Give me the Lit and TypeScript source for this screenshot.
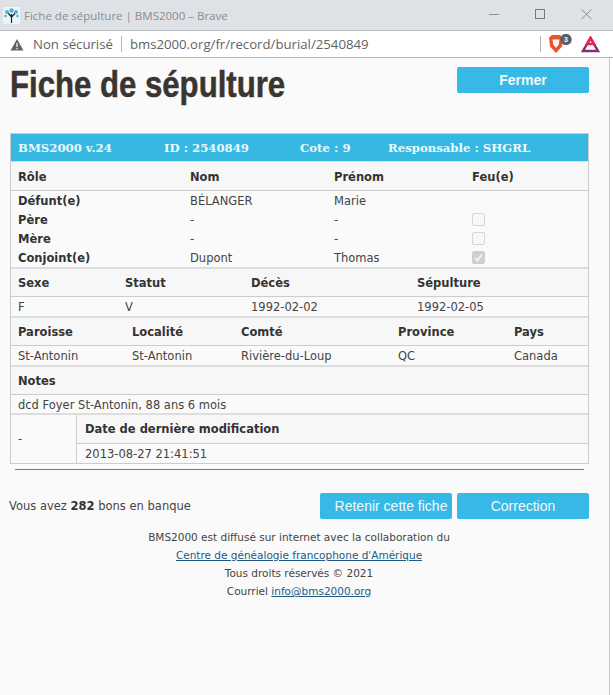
import { LitElement, html, css } from "lit";
import { customElement } from "lit/decorators.js";

@customElement("app-root")
export class AppRoot extends LitElement {
  static styles = css`
    :host { display: block; width: 613px; height: 695px; overflow: hidden; background: #fafafa; font-family: "DejaVu Sans", Verdana, sans-serif; font-size: 11.5px; color: #333; position: relative; }
    * { box-sizing: border-box; }
    .titlebar { height: 30px; background: #dee1e6; display: flex; align-items: center; padding-left: 3px; color: #8a8d91; font-family: "Open Sans", sans-serif; font-size: 11.5px; }
    .titlebar .t { margin-left: 4px; flex: 1; }
    .win { display: flex; align-items: center; }
    .win svg { display: block; }
    .addr { height: 28px; background: #fff; border-top: 1px solid #b9bcc0; border-bottom: 1px solid #b4b6b9; display: flex; align-items: center; padding-left: 10px; font-family: "Open Sans", sans-serif; font-size: 13.2px; color: #5f6368; }
    .addr .ns { margin-left: 9px; }
    .addr .sep { width: 1px; height: 16px; background: #b5b7ba; margin: 0 8px 0 8px; }
    .addr .url { flex: 1; }
    .addr .sep2 { margin: 0 7px 0 0; }
    .page { padding: 0 24px 0 10px; position: relative; }
    .top { display: flex; justify-content: space-between; align-items: flex-start; height: 75px; }
    h1 { margin: 6px 0 0; font-family: "Liberation Sans", sans-serif; font-size: 36px; font-weight: 700; color: #3a3530; line-height: 42px; transform: scaleX(0.865); transform-origin: left; white-space: nowrap; -webkit-text-stroke: 0.5px #3a3530; }
    .btn { width: 132px; height: 26px; background: #36b9e6; border-radius: 2px; color: #f0fbff; display: flex; align-items: center; justify-content: center; font-family: "Liberation Sans", sans-serif; font-size: 14px; }
    .btn.b { font-weight: 700; font-size: 14px; margin-top: 9px; }
    .btn.keep { padding-left: 10px; }
    .tbl { width: 579px; border: 1px solid #ccc; }
    .bar { height: 27px; background: #36b8e2; color: #eafaff; font-family: "DejaVu Serif", serif; font-weight: 700; font-size: 11.7px; display: grid; grid-template-columns: 146px 136px 88px 1fr; align-items: center; padding-left: 7px; }
    .row { display: grid; padding-left: 7px; align-items: center; }
    .head { height: 29px; background: #f7f7f7; border-bottom: 1px solid #ccc; font-weight: 700; font-size: 11.5px; color: #333; }
    .head.first { height: 30px; border-top: 1px solid #ddd; padding-top: 2px; }
    .val { height: 19px; font-size: 11.5px; color: #444; }
    .persons { grid-template-columns: 172px 144px 138px 1fr; }
    .pb { border-bottom: 2px solid #ddd; }
    .lbl { font-weight: 700; font-size: 11.5px; color: #333; }
    .deaths { grid-template-columns: 107px 126px 166px 1fr; }
    .places { grid-template-columns: 114px 109px 157px 116px 1fr; }
    .notes { grid-template-columns: 1fr; }
    .sec { border-bottom: 2px solid #ddd; }
    .sec .head { height: 28px; }
    .sec .val.short { height: 18px; padding-top: 2px; }
    .last { display: grid; grid-template-columns: 66px 1fr; }
    .last .dash { display: flex; align-items: center; padding-left: 7px; border-right: 1px solid #ccc; color: #444; }
    .last .row { padding-left: 8px; }
    .cb { width: 13px; height: 13px; border: 1px solid #d6d6d6; border-radius: 2px; background: #f8f8f8; display: block; }
    .cb.on { background: #cfcfcf; border-color: #cfcfcf; }
    .cb svg { display: block; }
    hr { border: 0; height: 1px; background: #777; margin: 5px 5px 0 5px; width: 569px; }
    .act { display: flex; align-items: center; margin-top: 23px; width: 579px; }
    .act .bank { flex: 1; color: #444; margin-left: -1px; }
    .act b { color: #333; }
    .act .btn { margin-left: 5px; }
    .foot { text-align: center; width: 578px; margin-top: 9px; font-size: 10.5px; line-height: 18px; color: #444; }
    .foot a { color: #1d5a86; text-decoration: underline; }
    .edge { position: absolute; top: 58px; right: 0; width: 4px; bottom: 0; background: #fff; border-left: 1px solid #c8c8c8; }
  `;
  cb(on = false) {
    return html`<span class="cb ${on ? "on" : ""}">${on ? html`<svg width="11" height="11" viewBox="0 0 11 11"><path d="M2 6l2.5 2.5L9 2.5" fill="none" stroke="#f4f4f4" stroke-width="2"/></svg>` : ""}</span>`;
  }
  render() {
    return html`
      <div class="titlebar">
        <svg width="17" height="17" viewBox="0 0 17 17"><rect width="17" height="17" fill="#eef4f7"/><path d="M8.5 16V7M8.5 10L5 6M8.5 10l4-4" stroke="#222" stroke-width="1.2" fill="none"/><g fill="#4db6d8"><circle cx="4" cy="5" r="2"/><circle cx="13" cy="5" r="2"/><circle cx="8.5" cy="3.500" r="2.2"/><circle cx="2.5" cy="9" r="1.3"/><circle cx="14.5" cy="9" r="1.3"/></g></svg>
        <span class="t">Fiche de sépulture | BMS2000 – Brave</span>
        <div class="win">
          <svg width="140" height="30" viewBox="0 0 140 30"><path d="M16 14.500h10" stroke="#8b8e92" fill="none"/><rect x="62.500" y="9.500" width="9" height="9" stroke="#77797d" fill="none"/><path d="M108.500 9.500l10 9.500M118.500 9.500L108.500 19" stroke="#8b8e92" fill="none"/></svg>
        </div>
      </div>
      <div class="addr">
        <svg width="14" height="13" viewBox="0 0 14 13"><path d="M7 1L13.500 12.500H.5z" fill="#5f6368"/><path d="M7 5v4M7 10v1.300" stroke="#fff" stroke-width="1.200"/></svg>
        <span class="ns">Non sécurisé</span><span class="sep"></span>
        <span class="url">bms2000.org/fr/record/burial/2540849</span>
        <span class="sep sep2"></span>
        <svg width="25" height="20" viewBox="0 0 25 20"><path d="M1 3.500L4 1h8l3 2.500-1 9-6 6.500-6-6.500z" fill="#e8552d"/><path d="M4.500 5.500h7l-.8 5-2.700 3.500-2.700-3.500z" fill="#fff3e8"/><circle cx="18" cy="5.500" r="5.700" fill="#5a5f69"/><text x="18" y="8" font-size="7" fill="#fff" text-anchor="middle" font-family="Liberation Sans" font-weight="700">3</text></svg>
        <svg style="margin:0 13px 0 8px" width="19" height="17" viewBox="0 0 19 17"><path d="M9.500 2L17 15H2z" fill="none" stroke="#8b2b78" stroke-width="2.500"/><path d="M9.500 2L13 8H6z" fill="none" stroke="#e6264f" stroke-width="2.500"/></svg>
      </div>
      <div class="page">
        <div class="top">
          <h1>Fiche de sépulture</h1>
          <div class="btn b">Fermer</div>
        </div>
        <div class="tbl">
          <div class="bar"><span>BMS2000 v.24</span><span>ID : 2540849</span><span>Cote : 9</span><span>Responsable : SHGRL</span></div>
          <div class="row head first persons"><span>Rôle</span><span>Nom</span><span>Prénom</span><span>Feu(e)</span></div>
          <div class="pb">
            <div class="row val persons"><span class="lbl">Défunt(e)</span><span>BÉLANGER</span><span>Marie</span><span></span></div>
            <div class="row val persons"><span class="lbl">Père</span><span>-</span><span>-</span>${this.cb()}</div>
            <div class="row val persons"><span class="lbl">Mère</span><span>-</span><span>-</span>${this.cb()}</div>
            <div class="row val persons"><span class="lbl">Conjoint(e)</span><span>Dupont</span><span>Thomas</span>${this.cb(true)}</div>
          </div>
          <div class="sec">
            <div class="row head deaths"><span>Sexe</span><span>Statut</span><span>Décès</span><span>Sépulture</span></div>
            <div class="row val deaths"><span>F</span><span>V</span><span>1992-02-02</span><span>1992-02-05</span></div>
          </div>
          <div class="sec">
            <div class="row head places"><span>Paroisse</span><span>Localité</span><span>Comté</span><span>Province</span><span>Pays</span></div>
            <div class="row val places"><span>St-Antonin</span><span>St-Antonin</span><span>Rivière-du-Loup</span><span>QC</span><span>Canada</span></div>
          </div>
          <div class="sec">
            <div class="row head notes"><span>Notes</span></div>
            <div class="row val short notes"><span>dcd Foyer St-Antonin, 88 ans 6 mois</span></div>
          </div>
          <div class="last">
            <div class="dash">-</div>
            <div>
              <div class="row head notes"><span>Date de dernière modification</span></div>
              <div class="row val notes"><span>2013-08-27 21:41:51</span></div>
            </div>
          </div>
        </div>
        <hr />
        <div class="act">
          <span class="bank">Vous avez <b>282</b> bons en banque</span>
          <div class="btn keep">Retenir cette fiche</div>
          <div class="btn">Correction</div>
        </div>
        <div class="foot">
          <div>BMS2000 est diffusé sur internet avec la collaboration du</div>
          <div><a>Centre de généalogie francophone d'Amérique</a></div>
          <div>Tous droits réservés © 2021</div>
          <div>Courriel <a>info@bms2000.org</a></div>
        </div>
      </div>
      <div class="edge"></div>
    `;
  }
}
